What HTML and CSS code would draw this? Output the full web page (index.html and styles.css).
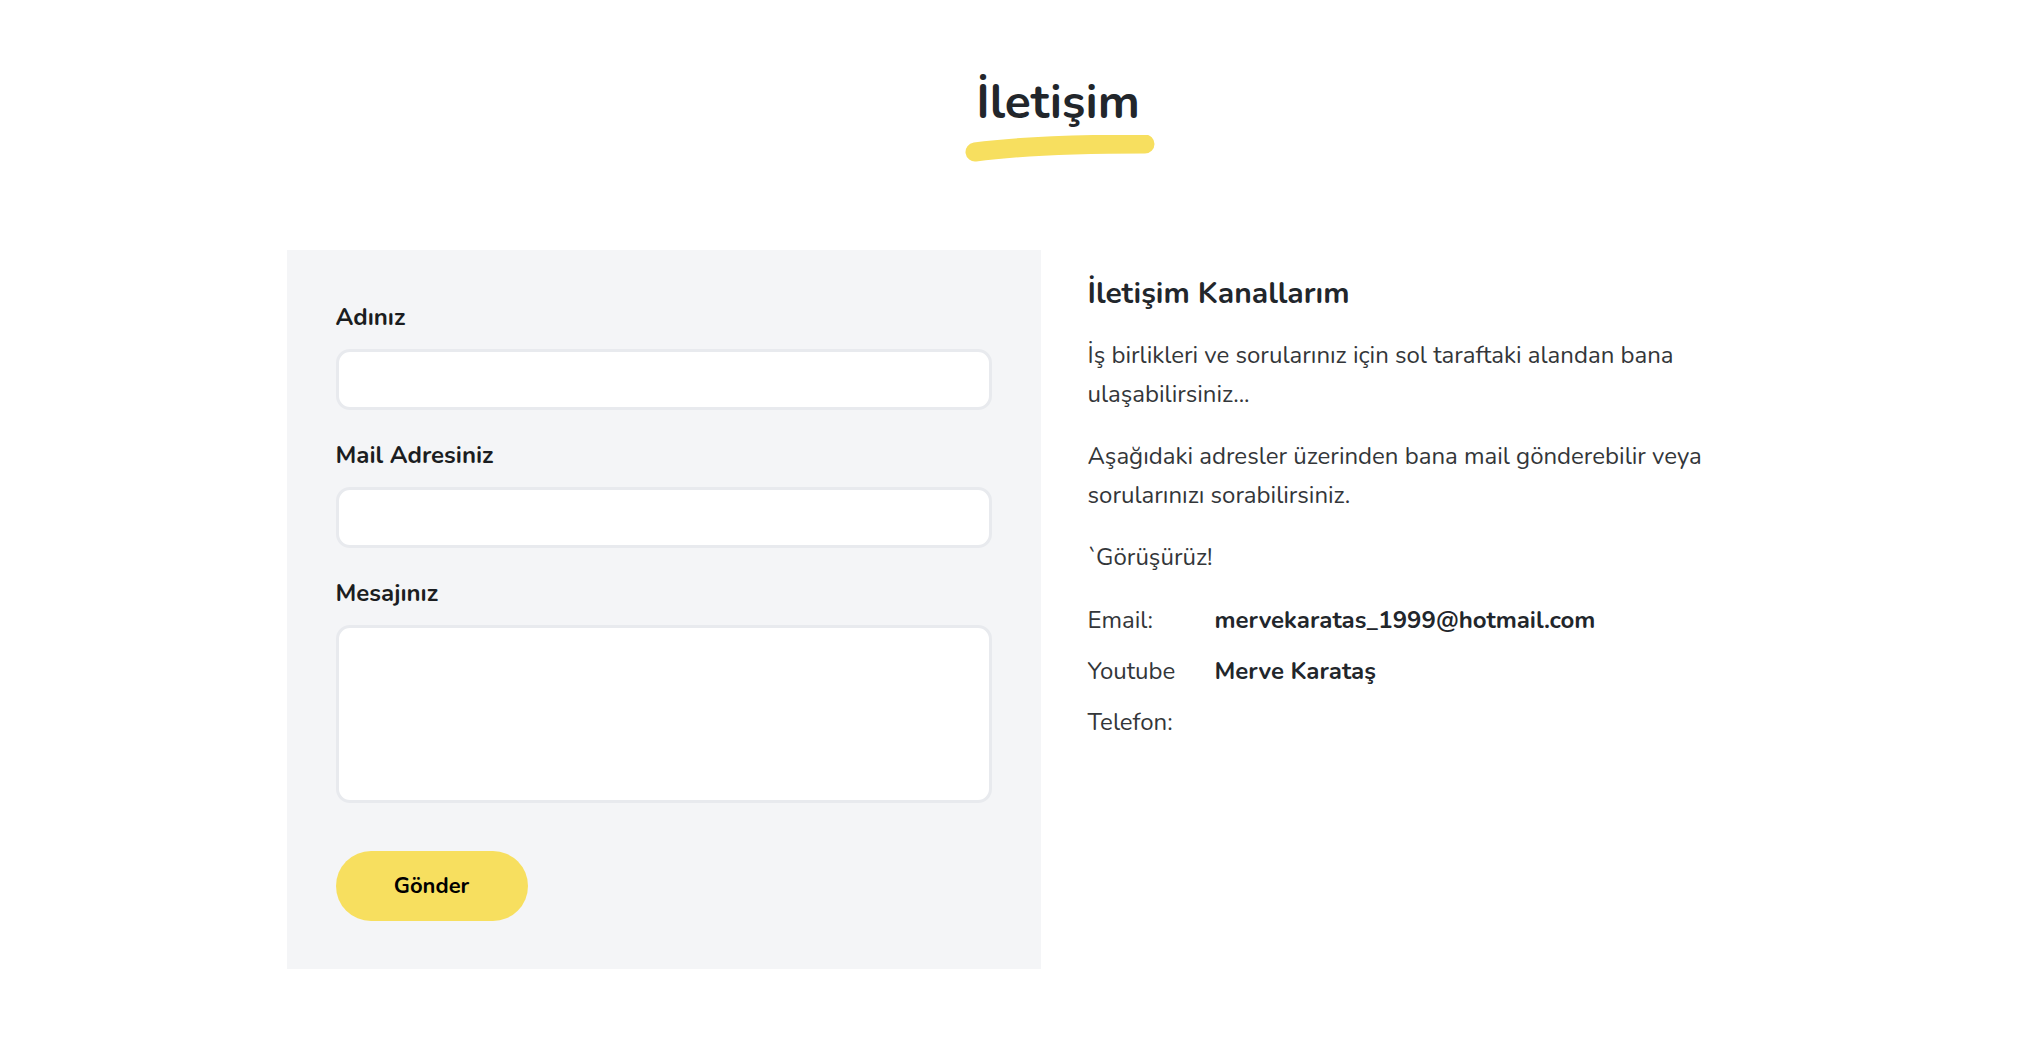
FILE: index.html
```html
<!DOCTYPE html>
<html lang="tr">
<head>
<meta charset="utf-8">
<title>İletişim</title>
<link rel="stylesheet" href="styles.css">
</head>
<body>
<header class="page-head">
  <div class="title-wrap">
    <h1 class="title">İletişim</h1>
    <svg class="brush" width="190" height="28" viewBox="0 0 190 28" aria-hidden="true">
      <path d="M10 17 Q 70 9 180 9" fill="none" stroke="#f7df5f" stroke-width="19" stroke-linecap="round"/>
    </svg>
  </div>
</header>
<main class="contact">
  <form class="card">
    <div class="field">
      <label class="label" for="ad">Adınız</label>
      <input class="input" id="ad" type="text">
    </div>
    <div class="field">
      <label class="label" for="mail">Mail Adresiniz</label>
      <input class="input" id="mail" type="email">
    </div>
    <div class="field">
      <label class="label" for="msg">Mesajınız</label>
      <textarea class="input textarea" id="msg"></textarea>
    </div>
    <button class="btn" type="button">Gönder</button>
  </form>
  <section class="info">
    <h2 class="info-title">İletişim Kanallarım</h2>
    <p class="text">İş birlikleri ve sorularınız için sol taraftaki alandan bana ulaşabilirsiniz...</p>
    <p class="text">Aşağıdaki adresler üzerinden bana mail gönderebilir veya sorularınızı sorabilirsiniz.</p>
    <p class="text">`Görüşürüz!</p>
    <dl class="channels">
      <dt>Email:</dt><dd>mervekaratas_1999@hotmail.com</dd>
      <dt>Youtube</dt><dd>Merve Karataş</dd>
      <dt>Telefon:</dt><dd></dd>
    </dl>
  </section>
</main>
</body>
</html>
```
FILE: styles.css
```css
* { box-sizing: border-box; }
html, body { margin: 0; padding: 0; background: #fff; }
body {
  font-family: "Nunito", "Lato", "Noto Sans", sans-serif;
  color: #212529;
}
.page-head {
  display: flex;
  justify-content: center;
  padding: 67px 0 0 81px;
  height: 250px;
}
.title-wrap {
  display: flex;
  flex-direction: column;
  align-items: center;
}
.title {
  margin: 0;
  font-size: 48px;
  line-height: 70px;
  font-weight: 700;
  color: #22262b;
}
.brush { display: block; margin-top: -2px; margin-left: 4px; }

.contact {
  width: 1462px;
  margin: 0 auto;
  display: grid;
  grid-template-columns: 754px 1fr;
  column-gap: 47px;
  align-items: start;
}
.card {
  background: #f4f5f7;
  padding: 50px 49px 48px 49px;
}
.field { margin-bottom: 28px; }
.field:last-of-type { margin-bottom: 48px; }
.label {
  display: block;
  font-size: 24px;
  line-height: 34px;
  font-weight: 700;
  color: #1b1d21;
  margin-bottom: 15px;
}
.input {
  display: block;
  width: 100%;
  height: 61px;
  background: #fff;
  border: 3px solid #e8eaee;
  border-radius: 14px;
  font: inherit;
  outline: none;
}
.textarea { height: 178px; resize: none; }
.btn {
  display: block;
  width: 192px;
  height: 70px;
  border: 0;
  border-radius: 35px;
  background: #f7df5f;
  font-family: inherit;
  font-size: 22px;
  font-weight: 700;
  color: #000;
  cursor: pointer;
}

.info { padding-top: 24px; }
.info-title {
  margin: 0 0 22px;
  font-size: 30px;
  line-height: 40px;
  font-weight: 700;
  color: #22262b;
}
.text {
  margin: 0 0 24px;
  max-width: 640px;
  font-size: 24px;
  line-height: 38.5px;
  color: #333639;
}
.channels {
  display: grid;
  grid-template-columns: 127px 1fr;
  row-gap: 13px;
  margin: 0;
  font-size: 24px;
  line-height: 38px;
}
.channels dt { color: #333639; }
.channels dd { margin: 0; font-weight: 700; color: #22262b; }
```
